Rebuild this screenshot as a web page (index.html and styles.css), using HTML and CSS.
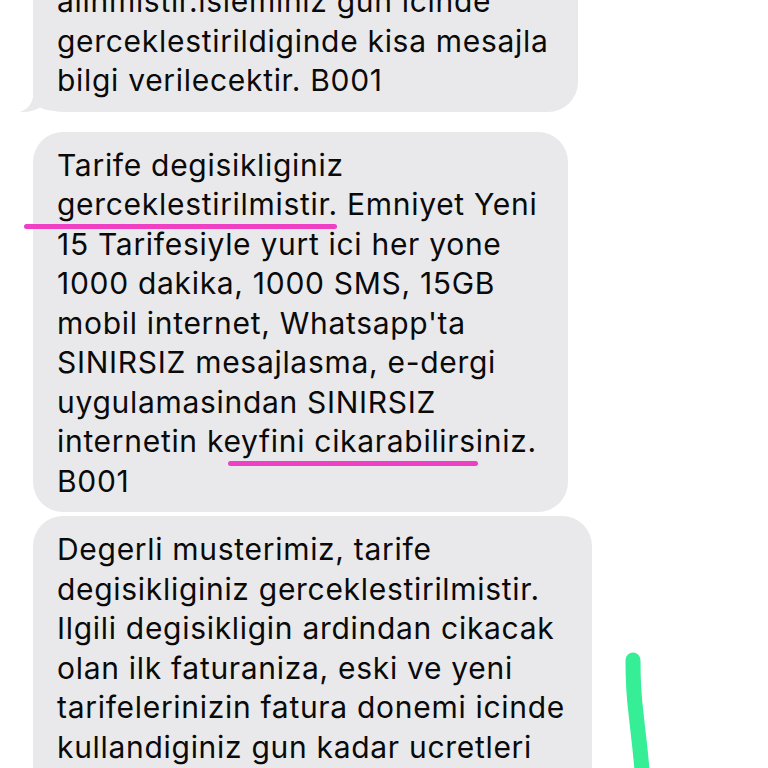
FILE: index.html
```html
<!DOCTYPE html>
<html lang="tr">
<head>
<meta charset="utf-8">
<title>Mesajlar</title>
<link rel="stylesheet" href="styles.css">
</head>
<body>
<main class="thread">
  <div class="bubble b1">
    <p class="line">alinmistir.isleminiz gun icinde</p>
    <p class="line">gerceklestirildiginde kisa mesajla</p>
    <p class="line">bilgi verilecektir. B001</p>
    <svg class="tail" width="40" height="32" viewBox="0 0 40 32" aria-hidden="true">
      <path d="M15,0 L15,14 C15,22 10,28 2,31 C10,31.6 17,29.5 22,26.5 C26,28.6 31,30 40,30.2 L40,0 Z" fill="#e9e9eb"/>
    </svg>
  </div>
  <div class="bubble b2">
    <p class="line">Tarife degisikliginiz</p>
    <p class="line">gerceklestirilmistir. Emniyet Yeni</p>
    <p class="line">15 Tarifesiyle yurt ici her yone</p>
    <p class="line">1000 dakika, 1000 SMS, 15GB</p>
    <p class="line">mobil internet, Whatsapp'ta</p>
    <p class="line">SINIRSIZ mesajlasma, e-dergi</p>
    <p class="line">uygulamasindan SINIRSIZ</p>
    <p class="line">internetin keyfini cikarabilirsiniz.</p>
    <p class="line">B001</p>
  </div>
  <div class="bubble b3">
    <p class="line">Degerli musterimiz, tarife</p>
    <p class="line">degisikliginiz gerceklestirilmistir.</p>
    <p class="line">Ilgili degisikligin ardindan cikacak</p>
    <p class="line">olan ilk faturaniza, eski ve yeni</p>
    <p class="line">tarifelerinizin fatura donemi icinde</p>
    <p class="line">kullandiginiz gun kadar ucretleri</p>
  </div>

  <span class="mark mark-1"></span>
  <span class="mark mark-2"></span>
  <svg class="stroke" width="60" height="130" viewBox="0 0 60 130" aria-hidden="true">
    <path d="M33,17 C33,40 34,55 36,70 C38,90 41,110 43,140" fill="none" stroke="#36ee96" stroke-width="15" stroke-linecap="round"/>
  </svg>
</main>
</body>
</html>
```

FILE: styles.css
```css
html, body {
  margin: 0;
  padding: 0;
  background: #ffffff;
}

body {
  height: 768px;
  overflow: hidden;
  font-family: Inter, "Liberation Sans", sans-serif;
  color: #0a0a0a;
}

.thread {
  position: relative;
  display: flex;
  flex-direction: column;
  align-items: flex-start;
  padding-left: 33px;
  margin-top: -32px;
}

.bubble {
  position: relative;
  background: #e9e9eb;
  border-radius: 30px;
  padding: 14px 20px 11px 24px;
  box-sizing: border-box;
}

.b3 {
  width: 559px;
  padding-bottom: 40px;
}

.line {
  margin: 0;
  font-size: 30px;
  line-height: 39.5px;
  white-space: nowrap;
  letter-spacing: 0.7px;
}

.b1 {
  width: 545px;
  margin-bottom: 20px;
}

.b2 {
  width: 535px;
  margin-bottom: 4px;
}

.tail {
  position: absolute;
  left: -15px;
  bottom: -1px;
  display: block;
}

.mark {
  position: absolute;
  height: 5px;
  border-radius: 3px;
  background: #ee3fc5;
}

.mark-1 {
  left: 24px;
  top: 256px;
  width: 313px;
}

.mark-2 {
  left: 228px;
  top: 493px;
  width: 250px;
}

.stroke {
  position: absolute;
  left: 600px;
  top: 675px;
}
```
